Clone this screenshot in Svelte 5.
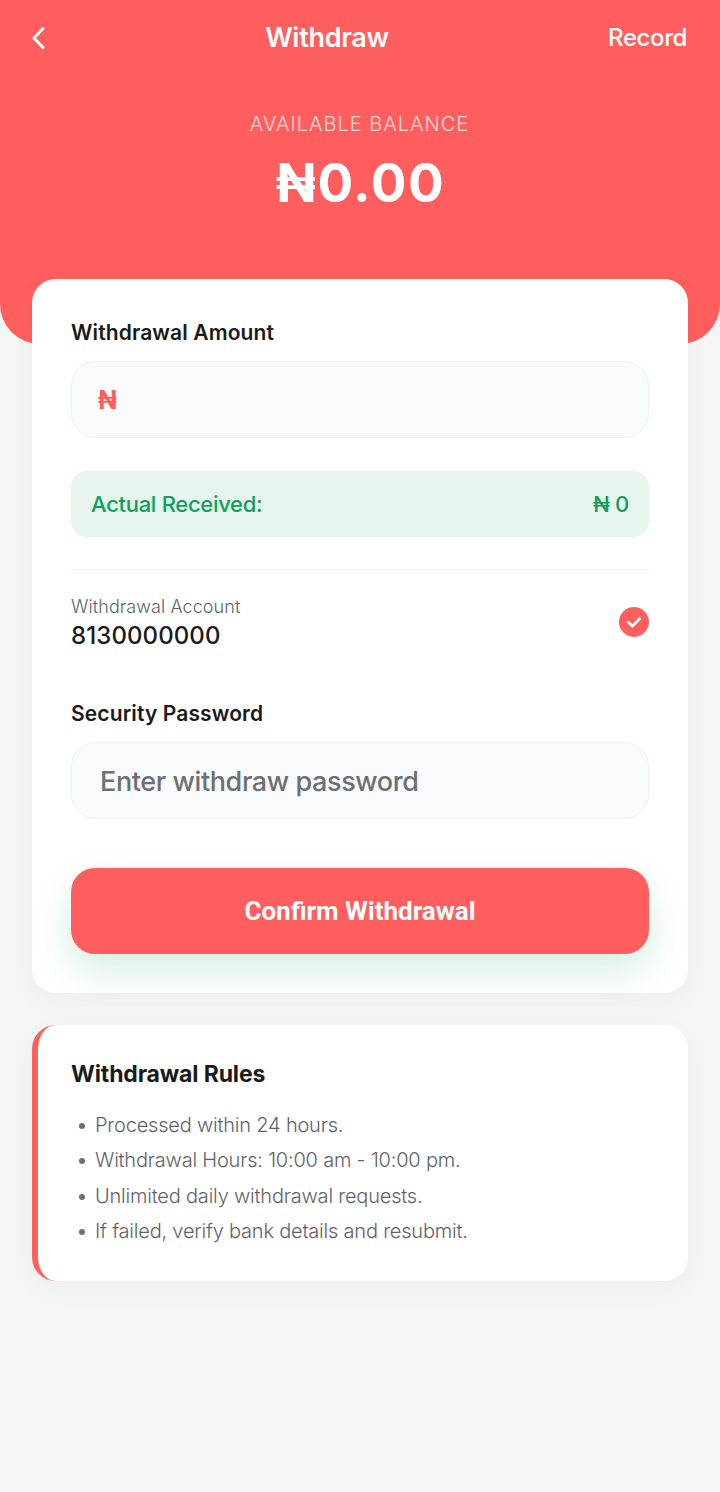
<script>
  const rules = [
    'Processed within 24 hours.',
    'Withdrawal Hours: 10:00 am - 10:00 pm.',
    'Unlimited daily withdrawal requests.',
    'If failed, verify bank details and resubmit.'
  ];
</script>

<div class="page">
  <header class="hero">
    <div class="nav">
      <button class="back" aria-label="Back">
        <svg viewBox="0 0 16 26" width="16" height="26" aria-hidden="true">
          <path d="M13 3.5 4 13l9 9.5" fill="none" stroke="currentColor" stroke-width="3" stroke-linecap="round" stroke-linejoin="round" />
        </svg>
      </button>
      <h1>Withdraw</h1>
      <span class="record">Record</span>
    </div>
    <p class="balance-label">AVAILABLE BALANCE</p>
    <p class="balance">₦0.00</p>
  </header>

  <main class="content">
    <section class="card form">
      <div class="label">Withdrawal Amount</div>
      <div class="field amount"><span class="currency">₦</span></div>

      <div class="received">
        <span>Actual Received:</span>
        <span class="received-value">₦ 0</span>
      </div>

      <div class="account">
        <div>
          <div class="account-label">Withdrawal Account</div>
          <div class="account-number">8130000000</div>
        </div>
        <svg class="check" viewBox="0 0 30 30" width="30" height="30" aria-hidden="true">
          <circle cx="15" cy="15" r="15" fill="#ff5e5e" />
          <path d="M9.5 15.5l4 3.6 7-7.4" fill="none" stroke="#fff" stroke-width="2.8" stroke-linecap="round" stroke-linejoin="round" />
        </svg>
      </div>

      <div class="label password-label">Security Password</div>
      <div class="field password">Enter withdraw password</div>

      <button class="confirm">Confirm Withdrawal</button>
    </section>

    <section class="card rules">
      <h2>Withdrawal Rules</h2>
      <ul>
        {#each rules as rule}
          <li>{rule}</li>
        {/each}
      </ul>
    </section>
  </main>
</div>

<style>
  :global(body) {
    margin: 0;
    background: #f4f6f5;
  }
  .page {
    height: 1492px;
    overflow: hidden;
    font-family: Inter, "Liberation Sans", sans-serif;
    color: #1a1a1a;
  }
  .hero {
    height: 344px;
    box-sizing: border-box;
    padding: 0 33px 0 30px;
    background: #ff5e5e;
    border-radius: 0 0 40px 40px;
    color: #fff;
    text-align: center;
  }
  .nav {
    display: flex;
    justify-content: space-between;
    align-items: center;
    height: 75px;
  }
  .back {
    display: flex;
    padding: 0;
    border: 0;
    background: none;
    color: #fff;
  }
  h1 {
    margin: 0;
    font-size: 27px;
    font-weight: 600;
    letter-spacing: -0.3px;
  }
  .record {
    font-size: 24px;
    font-weight: 500;
    letter-spacing: -0.4px;
  }
  .balance-label {
    margin: 36px 0 0 2px;
    font-size: 20px;
    line-height: 26px;
    letter-spacing: 1px;
    font-weight: 300;
    color: rgba(255, 255, 255, 0.78);
  }
  .balance {
    margin: 13px 0 0 4px;
    font-size: 53px;
    line-height: 66px;
    font-weight: 700;
    letter-spacing: 1.5px;
  }
  .content {
    display: flex;
    flex-direction: column;
    gap: 32px;
    margin: -65px 32px 0;
    position: relative;
  }
  .card {
    background: #fff;
    border-radius: 24px;
    box-shadow: 0 8px 30px rgba(0, 0, 0, 0.03);
  }
  .form {
    height: 714px;
    box-sizing: border-box;
    padding: 40px 39px 0;
  }
  .label {
    font-size: 21px;
    line-height: 28px;
    font-weight: 600;
    letter-spacing: 0.12px;
  }
  .field {
    display: flex;
    align-items: center;
    height: 77px;
    box-sizing: border-box;
    margin-top: 14px;
    background: #f9fafb;
    border: 1px solid #f1f2f4;
    border-radius: 24px;
  }
  .amount {
    padding-left: 26px;
  }
  .currency {
    font-size: 25px;
    font-weight: 700;
    color: #ff5e5e;
  }
  .received {
    display: flex;
    justify-content: space-between;
    align-items: center;
    height: 66px;
    margin-top: 33px;
    padding: 0 20px 0 20px;
    background: #e6f5ee;
    border-radius: 16px;
    font-size: 22px;
    font-weight: 500;
    letter-spacing: -0.3px;
    color: #11a05c;
  }
  .account {
    display: flex;
    justify-content: space-between;
    align-items: center;
    margin-top: 32px;
    padding-top: 25px;
    border-top: 1px solid #f3f4f4;
  }
  .account-label {
    font-size: 18px;
    line-height: 24px;
    font-weight: 300;
    color: #5f6368;
    letter-spacing: 0.08px;
  }
  .account-number {
    margin-top: 2px;
    font-size: 24px;
    line-height: 30px;
    font-weight: 550;
    letter-spacing: 0.1px;
  }
  .check {
    margin-bottom: 2px;
  }
  .password-label {
    margin-top: 49px;
  }
  .password {
    padding: 1px 0 0 28px;
    font-size: 27px;
    font-weight: 500;
    letter-spacing: -0.4px;
    color: #6c7075;
  }
  .confirm {
    display: block;
    width: 100%;
    height: 86px;
    margin-top: 49px;
    border: 0;
    border-radius: 24px;
    background: #ff5e5e;
    color: #fff;
    font-family: Roboto, sans-serif;
    font-size: 26px;
    font-weight: 700;
    box-shadow: 0 16px 36px rgba(17, 160, 92, 0.18);
  }
  .rules {
    height: 256px;
    box-sizing: border-box;
    padding: 34px 32px 0 33px;
    border-left: 6px solid #ff5e5e;
  }
  h2 {
    margin: 0;
    font-size: 23px;
    line-height: 30px;
    font-weight: 700;
    letter-spacing: -0.15px;
  }
  ul {
    margin: 19px 0 0;
    padding: 0 0 0 24px;
    list-style: none;
    font-size: 20px;
    line-height: 35.4px;
    font-weight: 300;
    color: #5f6368;
    letter-spacing: -0.2px;
  }
  li::before {
    content: "";
    display: inline-block;
    width: 6px;
    height: 6px;
    margin: 0 10px 0 -16px;
    border-radius: 50%;
    background: #6c7075;
    vertical-align: 3px;
  }
</style>
